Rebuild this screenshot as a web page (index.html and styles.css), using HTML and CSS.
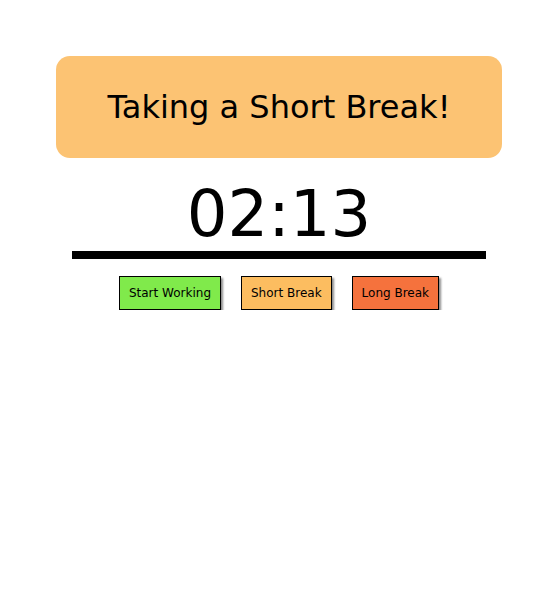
FILE: index.html
```html
<!DOCTYPE html>
<html>
<head>
<meta charset="utf-8">
<link rel="stylesheet" href="styles.css">
</head>
<body>
<div class="app">
  <div class="banner">Taking a Short Break!</div>
  <div class="timer">02:13</div>
  <div class="bar"></div>
  <div class="buttons">
    <button class="btn work">Start Working</button>
    <button class="btn short">Short Break</button>
    <button class="btn long">Long Break</button>
  </div>
</div>
</body>
</html>
```
FILE: styles.css
```css
html, body { margin: 0; padding: 0; background: #fff; }
body { font-family: "DejaVu Sans", sans-serif; color: #000; }
.app { display: flex; flex-direction: column; align-items: center; padding-top: 56px; }
.banner {
  width: 446px; height: 102px; box-sizing: border-box;
  background: #fcc373; border-radius: 14px;
  display: flex; align-items: center; justify-content: center;
  font-size: 32px;
}
.timer { font-size: 64px; line-height: 1; margin-top: 20px; height: 72px; display: flex; align-items: center; }
.bar { width: 414px; height: 8px; background: #000; margin-top: 1px; }
.buttons { display: flex; gap: 20px; margin-top: 17px; }
.btn {
  font-family: "DejaVu Sans", sans-serif; font-size: 12px; color: #000;
  height: 34px; padding: 0 9px; border: 1px solid #000; border-radius: 0;
  box-shadow: 2px 2px 2px rgba(0,0,0,0.45);
}
.work { background: #80ea4b; }
.short { background: #fcbd60; }
.long { background: #f5723d; }
```
